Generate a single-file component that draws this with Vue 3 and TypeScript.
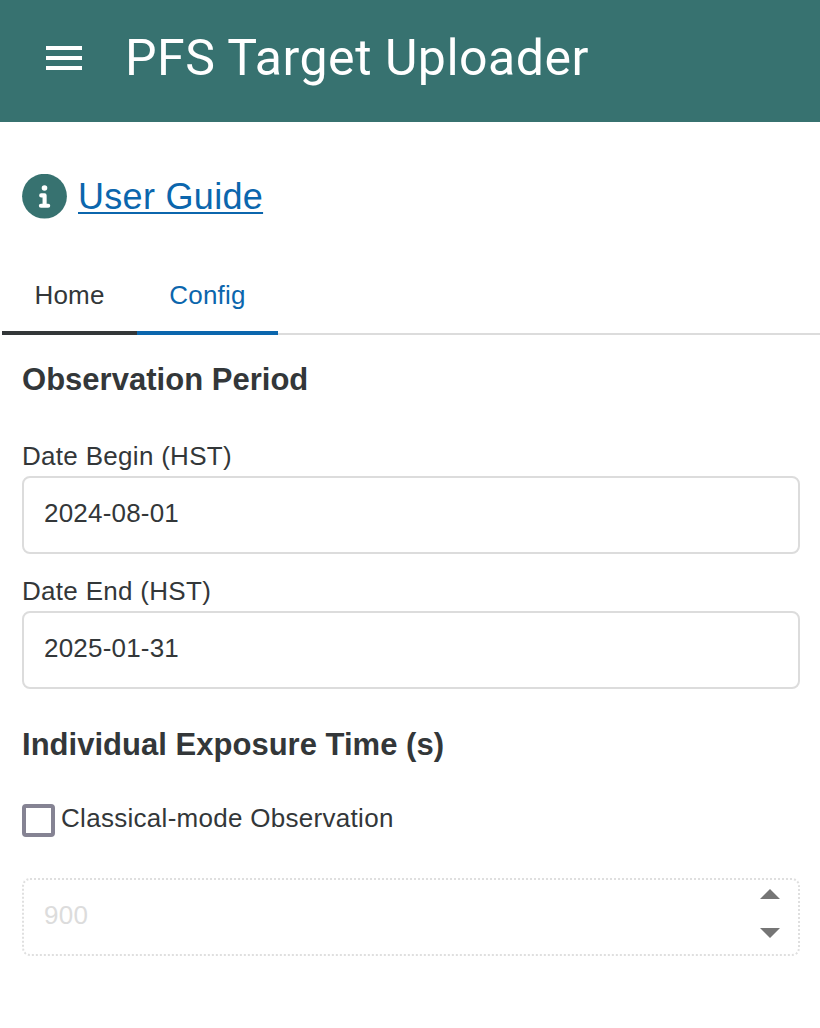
<script setup lang="ts">
import { ref } from 'vue'

const tabs = ['Home', 'Config']
const active = ref('Config')
const dates = ref([
  { label: 'Date Begin (HST)', value: '2024-08-01' },
  { label: 'Date End (HST)', value: '2025-01-31' },
])
</script>

<template>
  <div class="app">
    <header>
      <svg class="menu" viewBox="0 0 36 24"><path d="M0 0h36v4H0zM0 10h36v4H0zM0 20h36v4H0z" fill="#fff" /></svg>
      <span class="title">PFS Target Uploader</span>
    </header>
    <div class="guide">
      <svg class="info" viewBox="0 0 45 45">
        <circle cx="22.5" cy="22.2" r="22.4" fill="#377270" />
        <circle cx="22.5" cy="14" r="2.8" fill="#fff" />
        <path d="M19.2 21.4H22.6V31.7M18.9 31.7H26.2" fill="none" stroke="#fff" stroke-width="4.1" stroke-linecap="round" stroke-linejoin="round" />
      </svg>
      <a href="#">User Guide</a>
    </div>
    <nav>
      <button v-for="t in tabs" :key="t" :class="{ active: t === active }" @click="active = t">{{ t }}</button>
      <i></i>
    </nav>
    <main>
      <h2>Observation Period</h2>
      <div class="dates">
        <label v-for="d in dates" :key="d.label"><span>{{ d.label }}</span><input v-model="d.value" /></label>
      </div>
      <h2 class="second">Individual Exposure Time (s)</h2>
      <label class="check"><span class="box"></span><span class="text">Classical-mode Observation</span></label>
      <div class="spinner">
        <span>900</span>
        <svg viewBox="0 0 20 50"><path d="M0 10L10 0l10 10zM0 39h20L10 49z" fill="#757575" /></svg>
      </div>
    </main>
  </div>
</template>

<style>
body { margin: 0; background: #fff; }
</style>
<style scoped>
.app { width: 820px; height: 1028px; overflow: hidden; background: #fff; color: #333739; font-family: "Liberation Sans", Arial, sans-serif; font-size: 26px; }
header { height: 122px; box-sizing: border-box; background: #377270; display: flex; padding: 0 46px; }
.menu { width: 36px; height: 24px; margin-top: 46px; flex: none; }
.title { font: 400 50px/60px Roboto, sans-serif; color: #fff; margin: 28px 0 0 43px; letter-spacing: .5px; white-space: nowrap; }
.guide { display: flex; height: 46px; padding: 52px 22px 0; }
.info { width: 45px; height: 45px; margin-right: 11px; }
a { font-size: 36px; line-height: 46px; color: #0b66ad; letter-spacing: .3px; text-decoration-thickness: 2px; text-underline-offset: 3px; text-decoration-skip-ink: none; }
nav { display: flex; height: 75px; margin: 40px 0 0 2px; }
nav button { border: 0; border-bottom: 4px solid #333739; background: none; padding: 0; width: 135px; font: inherit; color: inherit; letter-spacing: .2px; }
nav button.active { width: 141px; color: #0b66ad; border-color: #0b66ad; }
nav i { flex: 1; border-bottom: 2px solid #dcdcdc; }
main { padding: 0 20px 0 22px; }
h2 { margin: 0; font-size: 31px; line-height: 36px; padding-top: 27px; letter-spacing: .02px; }
.dates { padding-top: 43px; }
.dates label { display: block; height: 135px; }
.dates label span { display: block; line-height: 30px; height: 35px; letter-spacing: .3px; }
input { box-sizing: border-box; display: block; width: 778px; height: 78px; border: 2px solid #dcdcdc; border-radius: 8px; padding: 0 20px 3px; font: inherit; color: inherit; letter-spacing: .2px; outline: 0; }
h2.second { padding-top: 16px; }
.check { display: flex; height: 34px; margin-top: 40px; }
.box { box-sizing: border-box; width: 33px; height: 33px; margin-top: .5px; border: 4px solid #858393; border-radius: 4px; }
.text { line-height: 30px; margin-left: 6px; letter-spacing: .29px; }
.spinner { box-sizing: border-box; height: 78px; margin-top: 41px; border: 2px dotted #dfdfdf; border-radius: 8px; display: flex; justify-content: space-between; padding: 0 18px 0 20px; color: #dcdcdc; line-height: 70px; letter-spacing: .3px; }
.spinner svg { width: 20px; height: 50px; margin-top: 9px; }
</style>
